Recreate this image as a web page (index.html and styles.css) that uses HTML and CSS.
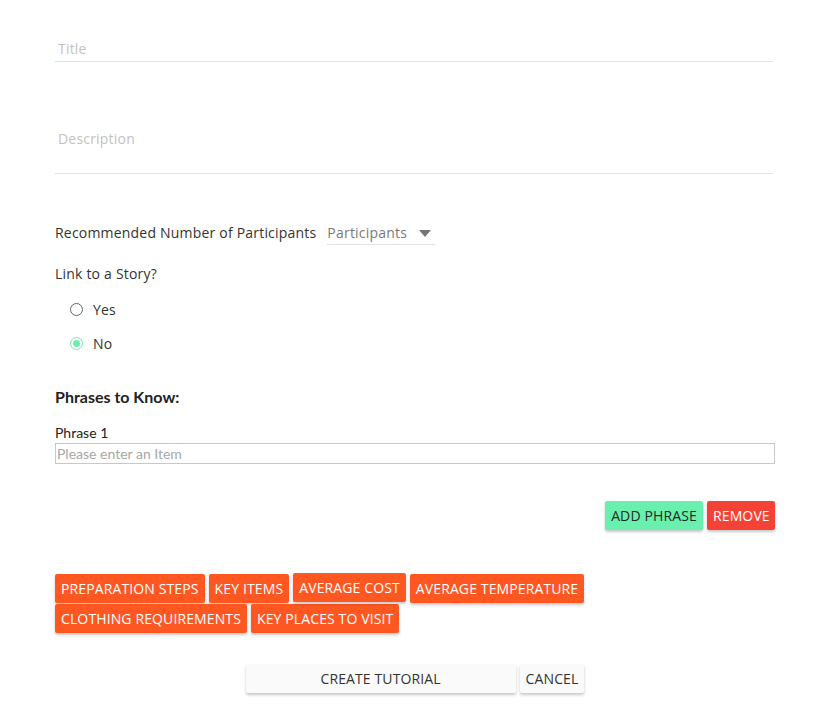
FILE: index.html
```html
<!DOCTYPE html>
<html>
<head>
<meta charset="utf-8">
<link rel="stylesheet" href="styles.css">
</head>
<body>
<div class="form">
  <div class="field title-field"><span class="ph">Title</span></div>
  <div class="field desc-field"><span class="ph">Description</span></div>

  <div class="participants">
    <span class="label">Recommended Number of Participants</span>
    <div class="select">
      <span class="sel-text">Participants</span>
      <svg class="caret" width="12" height="7" viewBox="0 0 12 7"><path d="M0 0h12L6 7z" fill="#757575"/></svg>
    </div>
  </div>

  <div class="label story">Link to a Story?</div>
  <div class="radios">
    <div class="radio"><span class="circle"></span><span class="rlabel">Yes</span></div>
    <div class="radio"><span class="circle checked"></span><span class="rlabel">No</span></div>
  </div>

  <div class="phrases-title">Phrases to Know:</div>
  <div class="phrase-label">Phrase 1</div>
  <div class="phrase-input">Please enter an Item</div>

  <div class="phrase-actions">
    <button class="btn green">ADD PHRASE</button>
    <button class="btn red">REMOVE</button>
  </div>

  <div class="tags">
    <button class="btn tag">PREPARATION STEPS</button>
    <button class="btn tag">KEY ITEMS</button>
    <button class="btn tag raised">AVERAGE COST</button>
    <button class="btn tag">AVERAGE TEMPERATURE</button>
    <button class="btn tag">CLOTHING REQUIREMENTS</button>
    <button class="btn tag">KEY PLACES TO VISIT</button>
  </div>

  <div class="footer">
    <button class="btn white create">CREATE TUTORIAL</button>
    <button class="btn white">CANCEL</button>
  </div>
</div>
</body>
</html>
```

FILE: styles.css
```css
* { box-sizing: border-box; }
body {
  margin: 0;
  background: #fff;
  font-family: "Open Sans", "Noto Sans", sans-serif;
  color: #333;
}
.form {
  width: 720px;
  margin-left: 55px;
  padding-bottom: 10px;
}
.field {
  width: 718px;
  border-bottom: 1px solid #e0e0e0;
  font-size: 14px;
}
.ph { color: #c2c2c2; display: block; line-height: 20px; padding-left: 3px; letter-spacing: 0.2px; }
.title-field { padding-top: 39px; padding-bottom: 2px; }
.desc-field { margin-top: 67px; padding-bottom: 24px; }

.participants {
  margin-top: 49px;
  display: flex;
  align-items: flex-start;
  font-size: 14px;
  line-height: 20px;
  letter-spacing: 0.2px;
}
.label { font-size: 14px; color: #333; line-height: 20px; letter-spacing: 0.2px; }
.select {
  margin-left: 11px;
  width: 108px;
  display: flex;
  align-items: center;
  justify-content: space-between;
  border-bottom: 1px solid #e0e0e0;
  height: 22px;
  padding-bottom: 2px;
}
.sel-text { color: #7a7a7a; }
.caret { margin-right: 4px; margin-top: 1px; }

.story { margin-top: 19px; }
.radios { margin-top: 14px; padding-left: 15px; }
.radio {
  display: flex;
  align-items: center;
  height: 22px;
  margin-bottom: 12px;
  font-size: 14px;
  letter-spacing: 0.2px;
}
.circle {
  width: 13px; height: 13px;
  border-radius: 50%;
  border: 1px solid #666;
  margin-right: 10px;
  position: relative;
}
.circle.checked { border-color: #69f0ae; }
.circle.checked::after {
  content: "";
  position: absolute;
  left: 2px; top: 2px;
  width: 7px; height: 7px;
  border-radius: 50%;
  background: #69f0ae;
}
.rlabel { color: #333; }

.phrases-title {
  margin-top: 33px;
  font-family: "Lato", "Noto Sans", sans-serif;
  font-weight: 700;
  font-size: 16px;
  line-height: 20px;
  color: #222;
}
.phrase-label {
  margin-top: 19px;
  font-family: "Lato", sans-serif;
  font-size: 14px;
  line-height: 14px;
  color: #222;
}
.phrase-input {
  margin-top: 3px;
  width: 720px;
  height: 21px;
  border: 1px solid #c8c8c8;
  font-family: "Lato", sans-serif;
  font-size: 14px;
  line-height: 19px;
  color: #a8a8a8;
  padding-left: 1px;
}

.btn {
  border: none;
  border-radius: 2px;
  font-family: "Open Sans", sans-serif;
  font-size: 14px;
  letter-spacing: 0.12px;
  height: 29px;
  padding: 0 6px;
  box-shadow: 0 2px 3px rgba(0,0,0,0.22);
  cursor: pointer;
}
.phrase-actions {
  margin-top: 37px;
  display: flex;
  justify-content: flex-end;
  gap: 4px;
}
.green { background: #69f0ae; color: #1d2b22; width: 98px; }
.red { background: #f44336; color: #fff; width: 68px; }

.tags {
  margin-top: 44px;
  display: flex;
  flex-wrap: wrap;
  width: 540px;
  column-gap: 4px;
  row-gap: 1px;
}
.tag { background: #ff5722; color: #fff; padding: 0 6px; height: 29px; }
.tag.raised { position: relative; top: -1px; }

.footer {
  margin-top: 31px;
  display: flex;
  justify-content: center;
  gap: 4px;
  padding-right: 0;
}
.white { background: #fafafa; color: #333; }
.create { width: 270px; }
```
